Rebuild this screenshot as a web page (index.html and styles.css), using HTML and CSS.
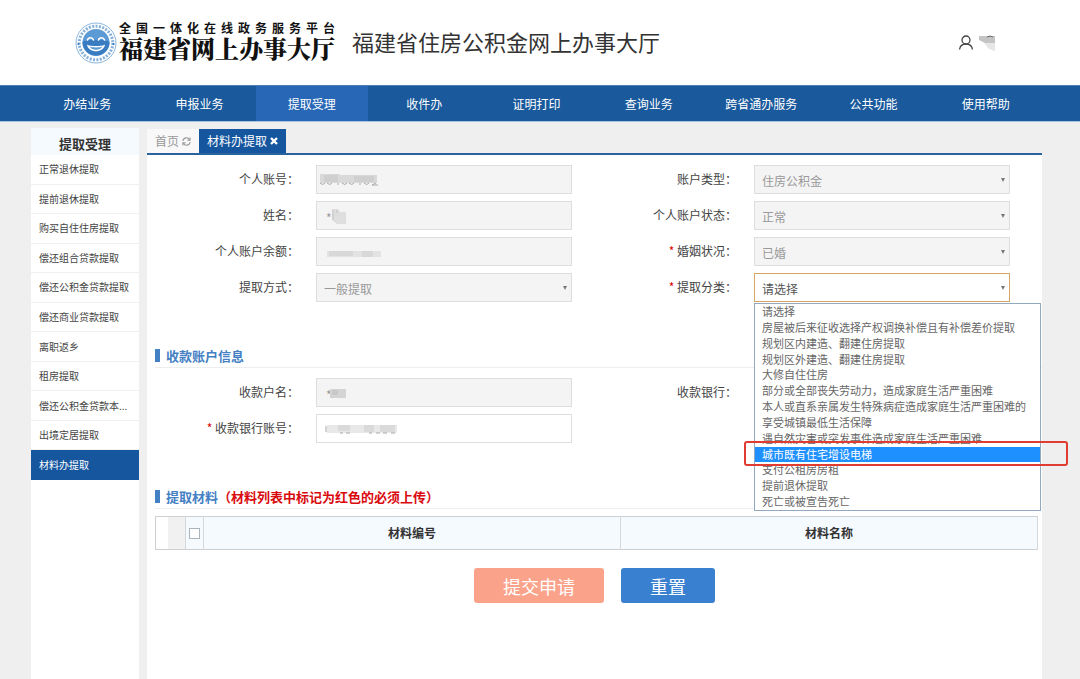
FILE: index.html
```html
<!DOCTYPE html>
<html lang="zh-CN">
<head>
    <meta charset="UTF-8">
    <meta name="viewport" content="width=device-width, initial-scale=1.0">
    <title>福建省住房公积金网上办事大厅</title>
    <link rel="stylesheet" href="styles.css">
</head>
<body>
    <header class="header">
        <a class="logo" href="#">
            <svg class="emblem" viewBox="0 0 42 42" width="42" height="42" aria-hidden="true">
                <circle cx="21" cy="21" r="20" fill="#fff" stroke="#8bb6dd" stroke-width="1"/>
                <circle cx="21" cy="21" r="16.8" fill="none" stroke="#85b0da" stroke-width="3" stroke-dasharray="2 1.400"/>
                <circle cx="21" cy="20.500" r="13.500" fill="#5b9ad4"/>
                <path d="M7.500 20a13.500 13.500 0 0 0 27 0c-3-3-24-3-27 0z" fill="#3a7cc2"/>
                <path d="M12.500 18c1-3 5-3 6 0M23.500 18c1-3 5-3 6 0" fill="none" stroke="#fff" stroke-width="1.600" stroke-linecap="round"/>
                <path d="M12 22.500c2 2 16 2 18 0c-1 9-17 9-18 0z" fill="#fff"/>
                <path d="M15 24.800c2 .8 10 .8 12 0c-1 4-11 4-12 0z" fill="#5b9ad4"/>
                <circle cx="3.500" cy="22" r="1" fill="#2f6fb4"/>
                <circle cx="38.500" cy="22" r="1" fill="#2f6fb4"/>
            </svg>
            <span class="logo-text">
                <span class="logo-small">全国一体化在线政务服务平台</span>
                <span class="logo-big">福建省网上办事大厅</span>
            </span>
        </a>
        <h1 class="site-title">福建省住房公积金网上办事大厅</h1>
        <div class="user">
            <svg viewBox="0 0 16 16" width="16" height="16" fill="none" stroke="#444" stroke-width="1.300" aria-hidden="true">
                <circle cx="8" cy="5" r="4"/>
                <path d="M1.500 14.500c.5-3.500 3-5.500 6.500-5.500s6 2 6.500 5.500"/>
            </svg>
            <svg viewBox="0 0 18 16" width="18" height="16" aria-hidden="true">
                <path d="M1 1h16v8H9L1 5z" fill="#c4c4c4"/>
                <path d="M6 8h11v8l-6-2z" fill="#e6e6e6"/>
                <path d="M9 2l3-1l3 1" stroke="#666" fill="none"/>
            </svg>
        </div>
    </header>

    <nav class="nav">
        <a href="#">办结业务</a>
        <a href="#">申报业务</a>
        <a href="#" class="active">提取受理</a>
        <a href="#">收件办</a>
        <a href="#">证明打印</a>
        <a href="#">查询业务</a>
        <a href="#">跨省通办服务</a>
        <a href="#">公共功能</a>
        <a href="#">使用帮助</a>
    </nav>

    <div class="layout">
        <aside class="sidebar">
            <h2 class="sidebar-title">提取受理</h2>
            <ul class="menu">
                <li><a href="#">正常退休提取</a></li>
                <li><a href="#">提前退休提取</a></li>
                <li><a href="#">购买自住住房提取</a></li>
                <li><a href="#">偿还组合贷款提取</a></li>
                <li><a href="#">偿还公积金贷款提取</a></li>
                <li><a href="#">偿还商业贷款提取</a></li>
                <li><a href="#">离职返乡</a></li>
                <li><a href="#">租房提取</a></li>
                <li><a href="#">偿还公积金贷款本...</a></li>
                <li><a href="#">出境定居提取</a></li>
                <li class="active"><a href="#">材料办提取</a></li>
            </ul>
        </aside>

        <main class="main">
            <div class="tabs">
                <a class="tab" href="#">首页
                    <svg viewBox="0 0 10 10" width="9" height="9" fill="none" stroke="#999" stroke-width="1.200" aria-hidden="true">
                        <path d="M1 4.500a4 4 0 0 1 7.500-1.500M9 5.500a4 4 0 0 1-7.500 1.500"/>
                        <path d="M9 .5v3h-3M1 9.500v-3h3"/>
                    </svg>
                </a>
                <a class="tab active" href="#">材料办提取
                    <svg viewBox="0 0 8 8" width="8" height="8" stroke="#fff" stroke-width="2.400" aria-hidden="true">
                        <path d="M1 1l6 6M7 1l-6 6"/>
                    </svg>
                </a>
            </div>

            <form class="content">
                <div class="form-grid">
                    <label for="account">个人账号：</label>
                    <div class="field">
                        <input id="account" type="text" readonly>
                        <svg class="mask" viewBox="0 0 90 20" width="90" height="20" aria-hidden="true">
                            <path d="M4 4h20v1h37v8H4z" fill="#d9d9d9"/>
                            <path d="M8 5h14v7H8zM38 6h20v6H38z" fill="#cfcfcf"/>
                            <path d="M4 13q3 3 5 0M11 13q3 3 5 0M22 13v2M26 13q3 3 5 0M33 13q3 3 5 0M44 13v2M48 13q3 3 5 0M60 13l-4 2h6" stroke="#aaa" fill="none"/>
                        </svg>
                    </div>
                    <label for="account-type">账户类型：</label>
                    <div class="field select">
                        <select id="account-type" disabled><option>住房公积金</option></select>
                    </div>

                    <label for="name">姓名：</label>
                    <div class="field">
                        <input id="name" type="text" value="*" readonly>
                        <svg class="mask" viewBox="0 0 90 20" width="90" height="20" aria-hidden="true">
                            <path d="M16 3h6l2 3h6v12h-9l-5-4z" fill="#dedede"/>
                            <path d="M17 4v10M21 4v3" stroke="#c4c4c4"/>
                        </svg>
                    </div>
                    <label for="status">个人账户状态：</label>
                    <div class="field select">
                        <select id="status" disabled><option>正常</option></select>
                    </div>

                    <label for="balance">个人账户余额：</label>
                    <div class="field">
                        <input id="balance" type="text" readonly>
                        <svg class="mask" viewBox="0 0 90 20" width="90" height="20" aria-hidden="true">
                            <path d="M11 9h54v6H11z" fill="#e3e3e3"/>
                            <path d="M13 9h24v5H13zM46 9h11v6H46z" fill="#d8d8d8"/>
                        </svg>
                    </div>
                    <label for="marriage"><i>*</i> 婚姻状况：</label>
                    <div class="field select">
                        <select id="marriage" disabled><option>已婚</option></select>
                    </div>

                    <label for="method">提取方式：</label>
                    <div class="field select">
                        <select id="method" disabled><option>一般提取</option></select>
                    </div>
                    <label for="category"><i>*</i> 提取分类：</label>
                    <div class="field select open">
                        <select id="category"><option>请选择</option></select>
                        <ul class="dropdown" role="listbox" aria-label="提取分类">
                            <li role="option">请选择</li>
                            <li role="option">房屋被后来征收选择产权调换补偿且有补偿差价提取</li>
                            <li role="option">规划区内建造、翻建住房提取</li>
                            <li role="option">规划区外建造、翻建住房提取</li>
                            <li role="option">大修自住住房</li>
                            <li role="option">部分或全部丧失劳动力，造成家庭生活严重困难</li>
                            <li role="option">本人或直系亲属发生特殊病症造成家庭生活严重困难的</li>
                            <li role="option">享受城镇最低生活保障</li>
                            <li role="option">遇自然灾害或突发事件造成家庭生活严重困难</li>
                            <li role="option" class="selected" aria-selected="true">城市既有住宅增设电梯</li>
                            <li role="option">支付公租房房租</li>
                            <li role="option">提前退休提取</li>
                            <li role="option">死亡或被宣告死亡</li>
                        </ul>
                    </div>
                </div>

                <h3 class="section-title">收款账户信息</h3>
                <div class="form-grid">
                    <label for="payee">收款户名：</label>
                    <div class="field">
                        <input id="payee" type="text" value="*" readonly>
                        <svg class="mask" viewBox="0 0 90 20" width="90" height="20" aria-hidden="true">
                            <path d="M14 6h16v9H14z" fill="#d4d4d4"/>
                            <path d="M16 7h6v5h-6z" fill="#c8c8c8"/>
                        </svg>
                    </div>
                    <label for="bank">收款银行：</label>
                    <div class="field select">
                        <select id="bank"><option>请选择</option></select>
                    </div>

                    <label for="bank-account"><i>*</i> 收款银行账号：</label>
                    <div class="field">
                        <input id="bank-account" type="text">
                        <svg class="mask" viewBox="0 0 90 20" width="90" height="20" aria-hidden="true">
                            <path d="M11 6h70v8H11z" fill="#e8e8e8"/>
                            <path d="M22 6h12v6H22zM48 6h10v7H48zM64 6h15v7H64z" fill="#dadada"/>
                            <path d="M10 7v6M24 14h3M30 14h4M53 14h3M60 14h4M67 14h4M75 14h4" stroke="#a8a8a8"/>
                        </svg>
                    </div>
                </div>

                <h3 class="section-title">提取材料<span class="warn">（材料列表中标记为红色的必须上传）</span></h3>
                <table class="materials">
                    <thead>
                        <tr>
                            <td class="col-blank"></td>
                            <td class="col-no"></td>
                            <th class="col-check"><input type="checkbox" aria-label="全选"></th>
                            <th>材料编号</th>
                            <th>材料名称</th>
                        </tr>
                    </thead>
                </table>

                <div class="actions">
                    <button type="button" class="btn submit">提交申请</button>
                    <button type="reset" class="btn reset">重置</button>
                </div>
            </form>
        </main>
    </div>
</body>
</html>
```
FILE: styles.css
```css
* {
    box-sizing: border-box;
}

body {
    margin: 0;
    min-height: 100vh;
    display: flex;
    flex-direction: column;
    font-family: "Noto Sans CJK SC", sans-serif;
    font-size: 12px;
    line-height: 16px;
    color: #444;
    background-color: #efefef;
}

a {
    color: inherit;
    text-decoration: none;
}

ul {
    margin: 0;
    padding: 0;
    list-style: none;
}

/* Header */
.header {
    display: flex;
    align-items: center;
    height: 85px;
    padding: 0 84px 0 75px;
    background-color: #fff;
}

.logo {
    display: flex;
    align-items: center;
    gap: 2px;
    color: #111;
}

.logo-text {
    display: flex;
    flex-direction: column;
}

.logo-small {
    font-family: "Liberation Sans", "Noto Sans CJK SC", sans-serif;
    font-size: 12px;
    line-height: 14px;
    font-weight: bold;
    text-align-last: justify;
}

.logo-big {
    font-family: "Liberation Serif", "Noto Serif CJK SC", "Noto Sans CJK SC", serif;
    font-size: 24px;
    line-height: 28px;
    font-weight: 900;
}

.site-title {
    margin: 0 0 0 17px;
    padding-bottom: 4px;
    font-size: 22px;
    line-height: 30px;
    font-weight: normal;
    color: #333;
}

.user {
    display: flex;
    gap: 4px;
    margin-left: auto;
}

/* Navigation */
.nav {
    display: flex;
    height: 37px;
    padding: 0 38px 0 31px;
    background-color: #19599c;
    border-top: 1px solid #4b7fb5;
    border-bottom: 1px solid #a9c6e0;
}

.nav a {
    flex: 1;
    line-height: 35px;
    text-align: center;
    color: #fff;
}

.nav a.active {
    background-color: #2767b5;
}

.layout {
    flex: 1;
    display: flex;
    gap: 8px;
    padding: 6px 38px 0 31px;
}

/* Sidebar */
.sidebar {
    width: 108px;
    background-color: #fff;
}

.sidebar-title {
    height: 27px;
    margin: 0;
    padding-top: 6px;
    font-size: 13px;
    line-height: 20px;
    text-align: center;
    color: #333;
    background-color: #f5faff;
}

.menu {
    display: grid;
    grid-template-rows: repeat(11, 1fr);
    height: 325px;
    font-size: 10px;
}

.menu li {
    display: flex;
    align-items: center;
    padding-left: 8px;
    border-bottom: 1px solid #f0f0f0;
    white-space: nowrap;
}

.menu li.active {
    color: #fff;
    background-color: #15569f;
    border-color: #15569f;
}

/* Tabs */
.main {
    flex: 1;
    background-color: #fff;
}

.tabs {
    display: flex;
    height: 27px;
    padding-top: 1px;
    background-color: #efefef;
    border-bottom: 2px solid #2a629c;
}

.tab {
    display: flex;
    align-items: center;
    gap: 3px;
    padding: 0 8px;
    color: #999;
    background-color: #f8f8f8;
}

.tab.active {
    color: #fff;
    background-color: #15569f;
}

/* Form */
.content {
    padding-top: 10px;
}

.form-grid {
    display: grid;
    grid-template-columns: 152px 1fr 148px 1fr;
    gap: 7px 17px;
    align-items: center;
    padding-right: 32px;
}

.form-grid label {
    padding-bottom: 2px;
    text-align: right;
}

.form-grid label i {
    font-style: normal;
    color: #d00;
}

.field {
    position: relative;
    height: 29px;
}

.field input,
.field select {
    display: block;
    width: 100%;
    height: 29px;
    margin: 0;
    padding: 3px 7px 0;
    font: inherit;
    color: #555;
    background-color: #fff;
    border: 1px solid #dcdfdf;
    border-radius: 0;
    appearance: none;
}

.field input:read-only,
.field select:disabled {
    color: #999;
    background-color: #f4f4f4;
    opacity: 1;
}

.field input {
    padding-left: 9px;
}

.select::after {
    content: "";
    position: absolute;
    top: 13px;
    right: 5px;
    border: 2px solid transparent;
    border-top: 4px solid #777;
    border-bottom: 0;
}

.mask {
    position: absolute;
    left: 0;
    top: 5px;
}

.field.open select {
    border-color: #d5a565;
}

/* Option list */
.dropdown {
    position: absolute;
    z-index: 10;
    top: 30px;
    left: 0;
    right: -31px;
    display: grid;
    grid-template-rows: repeat(13, 1fr);
    height: 208px;
    font-size: 11px;
    line-height: 15px;
    color: #666;
    background-color: #fff;
    border: 1px solid #93a9c0;
}

.dropdown li {
    padding-left: 7px;
    white-space: nowrap;
}

.dropdown .selected {
    position: relative;
    color: #fff;
    background-color: #1e90ff;
}

.dropdown .selected::after {
    content: "";
    position: absolute;
    top: -6px;
    right: -28px;
    bottom: -4px;
    left: -11px;
    border: 2px solid #e03c31;
    border-radius: 3px;
}

.section-title {
    display: flex;
    align-items: center;
    height: 24px;
    margin: 42px 0 10px 8px;
    font-size: 13px;
    color: #4480c4;
    border-bottom: 1px solid #eee;
}

.section-title::before {
    content: "";
    width: 5px;
    height: 13px;
    margin-right: 6px;
    background-color: #4480c4;
}

.warn {
    color: #d9090e;
}

/* Materials table */
.materials {
    width: calc(100% - 12px);
    height: 34px;
    margin: -3px 4px 0 8px;
    table-layout: fixed;
    border-collapse: collapse;
    border: 1px solid #ccd0d3;
}

.materials th,
.materials td {
    padding: 0;
    color: #333;
    background-color: #f5faff;
    border-right: 1px solid #d5d8da;
}

.materials .col-blank {
    width: 12px;
    background-color: #fff;
    border-right: 0;
}

.materials .col-no {
    width: 18px;
    background-color: #f1f1f1;
}

.materials .col-check {
    width: 18px;
}

.col-check input {
    display: block;
    width: 11px;
    height: 11px;
    margin: 0 auto;
    background-color: #fff;
    border: 1px solid #aab4bd;
    appearance: none;
}

/* Buttons */
.actions {
    display: flex;
    justify-content: center;
    gap: 17px;
    margin-top: 18px;
}

.btn {
    height: 35px;
    padding: 0 29px;
    font: inherit;
    font-size: 18px;
    color: #fff;
    border: 0;
    border-radius: 3px;
    cursor: pointer;
}

.submit {
    background-color: #fba28b;
}

.reset {
    background-color: #3a80d0;
}
```
